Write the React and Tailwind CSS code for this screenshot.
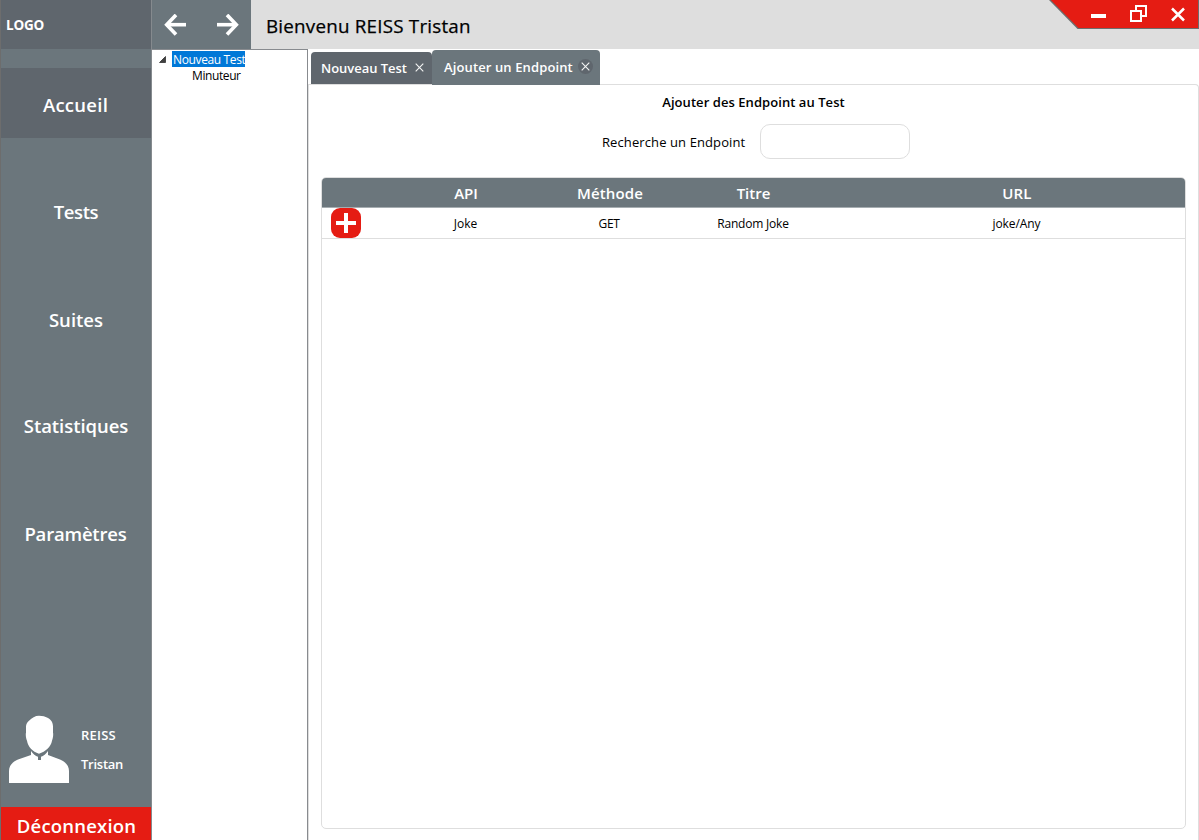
import React from "react";

const navItems = [
  { label: "Accueil", box: "mt-[19px] h-[70px] bg-[#5f666d] pt-[3px]", text: "mr-px tracking-[0.25px]" },
  { label: "Tests", box: "mt-[39px] h-[70px]", text: "tracking-[-0.4px]" },
  { label: "Suites", box: "mt-[38px] h-[70px]", text: "" },
  { label: "Statistiques", box: "mt-[36px] h-[70px]", text: "tracking-[-0.06px]" },
  { label: "Paramètres", box: "mt-[38px] h-[70px]", text: "mr-px tracking-[-0.2px]" },
];

function Sidebar() {
  return (
    <aside className="flex w-[152px] shrink-0 flex-col border-x border-l-[#6d6d6d] border-r-[#858a8e] bg-[#6b767c] text-white">
      <div className="flex h-[49px] shrink-0 items-center bg-[#5f666d] pt-px pl-[5px] text-[13.5px] font-bold tracking-[-0.2px]">
        LOGO
      </div>
      <nav className="flex flex-col">
        {navItems.map((n) => (
          <div key={n.label} className={`flex items-center justify-center text-[18.5px] font-semibold ${n.box}`}>
            <span className={n.text}>{n.label}</span>
          </div>
        ))}
      </nav>
      <div className="mt-auto flex h-[68px] items-start">
        <svg className="ml-2 h-[68px] w-[60px]" viewBox="0 0 60 68" fill="#fff">
          <path d="M30 .8c4 0 6 .7 8.500 2c4 2 5.500 5 5.500 9v6c.5 1 0 6-1 8c-1 6-6.500 11-13 13c-6.500-2-11-7-12-13c-1-2-1.500-7-1-8v-6c0-2.500 1-4.500 3-6c3-3 6-5 10-5z" />
          <path d="M22 36c2 3 4.500 5 7 5.800V45h3v-3.200c2.500-.8 5-2.800 7-5.800v4l12 4.500c6 2.500 9 6.500 9 11.500v12H0V56c0-5 3-9 9-11.500l13-4.500z" />
        </svg>
        <div className="ml-3 flex flex-col text-[13px] leading-[29px] font-semibold">
          <span className="mt-[6px] tracking-[0.2px]">REISS</span>
          <span className="tracking-[-0.25px]">Tristan</span>
        </div>
      </div>
      <div className="mt-[24px] flex h-[33px] shrink-0 items-center justify-center bg-[#e51c13] pt-[5px] pl-px text-[18.5px] font-semibold tracking-[0.2px]">
        Déconnexion
      </div>
    </aside>
  );
}

function Arrow({ flip }) {
  return (
    <svg className={`h-[22px] w-[22px] ${flip ? "-scale-x-100" : ""}`} viewBox="0 0 22 22" fill="none" stroke="#fff">
      <path d="M2.5 10.700H22" strokeWidth="3.6" />
      <path d="M12 .9L2.7 10.700L12 20.5" strokeWidth="3.6" />
    </svg>
  );
}

function WindowControls() {
  return (
    <svg className="h-[29px] w-[150px]" viewBox="0 0 150 29">
      <path d="M0 0H150V29H28.500z" fill="#6d6d6d" />
      <path d="M1.800 0H149V28H29.500z" fill="#e51c13" />
      <path d="M42 14h15v4H42z" fill="#fff" />
      <path d="M87 10V6h10v10h-4M82 11h10v10H82z" fill="none" stroke="#fff" strokeWidth="2" />
      <path d="M123 8.500L135 20.500M135 8.500L123 20.500" stroke="#fff" strokeWidth="2.500" />
    </svg>
  );
}

function CloseGlyph() {
  return (
    <svg className="h-[9px] w-[9px]" viewBox="0 0 9 9" stroke="#f4f4f4" strokeWidth="1.100">
      <path d="M.7.7L8.300 8.300M8.300.7L.7 8.300" />
    </svg>
  );
}

function TopBar() {
  return (
    <header className="flex h-[49px] shrink-0 bg-[#dedede]">
      <div className="flex w-[99px] items-center gap-[31px] bg-[#6b767c] pl-3">
        <Arrow />
        <Arrow flip />
      </div>
      <h1 className="mt-[13px] ml-[15px] grow text-[18.8px] leading-[27px] font-medium tracking-[0.22px] text-black [-webkit-text-stroke:0.25px_#000]">
        Bienvenu REISS Tristan
      </h1>
      <WindowControls />
    </header>
  );
}

function Tree() {
  return (
    <div className="flex w-[156px] shrink-0 flex-col border-t border-r border-[#888b8f] pt-px text-[12px] leading-[16px]">
      <div className="flex h-4">
        <svg className="mt-[5px] ml-[7px] h-[7px] w-[7px]" viewBox="0 0 7 7">
          <path d="M6.500.5V6.500H.5z" fill="#404040" stroke="#222" strokeWidth=".7" />
        </svg>
        <span className="ml-[6px] w-[73px] bg-[#0078d7] pt-px pl-px tracking-[-0.36px] whitespace-nowrap text-white">Nouveau Test</span>
      </div>
      <span className="mt-px ml-[40px] tracking-[-0.4px] text-black">Minuteur</span>
    </div>
  );
}

const cols = "grid grid-cols-[72px_144px_144px_144px_1fr] items-center text-center";

function EndpointTable() {
  return (
    <div className="mx-3 mb-[11px] flex grow flex-col overflow-hidden rounded-[5px] border border-[#dedede]">
      <div className={`${cols} h-[30px] shrink-0 border-b border-[#a6adb1] bg-[#6b767c] pt-[2px] text-[15px] font-semibold text-white`}>
        <span />
        <span>API</span>
        <span className="tracking-[0.1px]">Méthode</span>
        <span className="pr-px">Titre</span>
        <span className="pl-[23px] tracking-[0.2px]">URL</span>
      </div>
      <div className={`${cols} h-[31px] shrink-0 border-b border-[#dedede] text-[12px] text-black`}>
        <svg className="ml-[9px] h-[30px] w-[30px]" viewBox="0 0 30 30">
          <rect width="30" height="30" rx="9" fill="#e51c13" />
          <path d="M13 5h4v8h8v4h-8v8h-4v-8H5v-4h8z" fill="#fff" />
        </svg>
        <span className="pt-[2px] pr-px">Joke</span>
        <span className="pt-[2px] pr-[2px] tracking-[-0.4px]">GET</span>
        <span className="pt-[2px] pr-[2px] tracking-[-0.2px]">Random Joke</span>
        <span className="pt-[2px] pl-[22px] tracking-[-0.1px]">joke/Any</span>
      </div>
    </div>
  );
}

function Main() {
  return (
    <main className="flex min-w-0 grow flex-col">
      <div className="flex h-[35px] shrink-0 items-start pt-px pl-[3px] text-[13px] font-semibold text-white">
        <div className="mt-[2px] flex h-8 w-[121px] items-center rounded-t-[4px] bg-[#5f666d] pl-[10px]">
          <span className="w-[94px] pt-px tracking-[-0.03px] whitespace-nowrap">Nouveau Test</span>
          <div className="-mt-[2px] flex">
            <CloseGlyph />
          </div>
        </div>
        <div className="relative z-10 flex h-[35px] w-[168px] items-center rounded-t-[4px] bg-[#6b767c] pl-3">
          <span className="w-[134px] tracking-[0.12px] whitespace-nowrap">Ajouter un Endpoint</span>
          <div className="-mt-[2px] flex h-[15px] w-[15px] items-center justify-center rounded-full bg-[#5f666d]">
            <CloseGlyph />
          </div>
        </div>
      </div>
      <section className="flex grow flex-col rounded-tr-[4px] border border-b-0 border-[#dedede] text-black">
        <h2 className="mt-[7px] text-center text-[13px] leading-[20px] font-semibold tracking-[0.06px]">
          Ajouter des Endpoint au Test
        </h2>
        <div className="mt-[12px] mb-[18px] flex h-[35px] items-center pl-[293px]">
          <label className="w-[158px] pt-[2px] text-[13px] tracking-[0.1px] whitespace-nowrap">Recherche un Endpoint</label>
          <input className="h-[35px] w-[150px] rounded-[10px] border border-[#dedede] outline-none" />
        </div>
        <EndpointTable />
      </section>
    </main>
  );
}

export default function App() {
  return (
    <div className="flex h-[840px] w-[1199px] overflow-hidden bg-white font-['Open_Sans','Noto_Sans',sans-serif]">
      <Sidebar />
      <div className="flex min-w-0 grow flex-col">
        <TopBar />
        <div className="flex grow">
          <Tree />
          <Main />
        </div>
      </div>
    </div>
  );
}
